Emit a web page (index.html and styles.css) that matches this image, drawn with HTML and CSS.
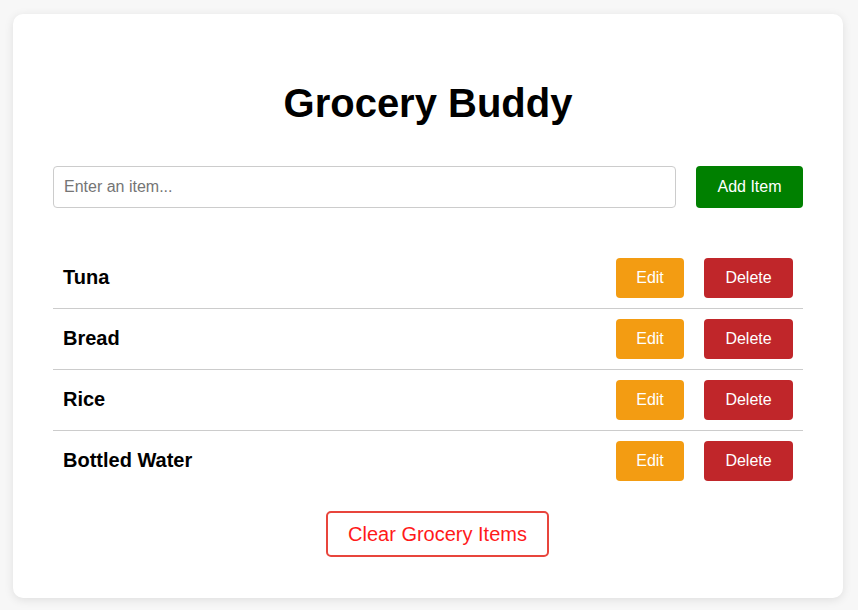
FILE: index.html
```html
<!DOCTYPE html>
<html lang="en">
<head>
<meta charset="UTF-8">
<title>Grocery Buddy</title>
<link rel="stylesheet" href="styles.css">
</head>
<body>
<main class="card">
  <h1 class="title">Grocery Buddy</h1>
  <form class="add-form">
    <input class="add-input" type="text" placeholder="Enter an item...">
    <button class="btn btn-add" type="button">Add Item</button>
  </form>
  <ul class="list">
    <li class="item"><span class="item-name">Tuna</span><div class="actions"><button class="btn btn-edit">Edit</button><button class="btn btn-delete">Delete</button></div></li>
    <li class="item"><span class="item-name">Bread</span><div class="actions"><button class="btn btn-edit">Edit</button><button class="btn btn-delete">Delete</button></div></li>
    <li class="item"><span class="item-name">Rice</span><div class="actions"><button class="btn btn-edit">Edit</button><button class="btn btn-delete">Delete</button></div></li>
    <li class="item"><span class="item-name">Bottled Water</span><div class="actions"><button class="btn btn-edit">Edit</button><button class="btn btn-delete">Delete</button></div></li>
  </ul>
  <div class="clear-wrap"><button class="btn btn-clear">Clear Grocery Items</button></div>
</main>
</body>
</html>
```
FILE: styles.css
```css
* { box-sizing: border-box; }
html, body { margin: 0; }
body {
  background: #f7f7f7;
  font-family: "Liberation Sans", Arial, sans-serif;
  padding: 14px 15px 0 13px;
  min-height: 610px;
}
.card {
  background: #fff;
  border-radius: 10px;
  box-shadow: 0 2px 10px rgba(0,0,0,0.1);
  padding: 40px;
  width: 830px;
  height: 584px;
}
.title {
  font-size: 40px;
  font-weight: bold;
  text-align: center;
  color: #000;
  margin: 26px 0 40px;
  line-height: 46px;
}
.add-form {
  display: flex;
  gap: 20px;
  margin-bottom: 40px;
}
.add-input {
  flex: 1;
  height: 42px;
  border: 1px solid #ccc;
  border-radius: 4px;
  padding: 0 10px;
  font-size: 16px;
  font-family: "Liberation Sans", Arial, sans-serif;
  color: #333;
}
.add-input::placeholder { color: #757575; }
.btn {
  border: none;
  border-radius: 4px;
  font-family: "Liberation Sans", Arial, sans-serif;
  font-size: 16px;
  color: #fff;
  padding: 0 20px;
  cursor: pointer;
}
.btn-add {
  background: #008000;
  height: 42px;
  width: 107px;
  padding: 0;
}
.list {
  list-style: none;
  margin: 0;
  padding: 0;
}
.item {
  display: flex;
  align-items: center;
  justify-content: space-between;
  padding: 10px;
  border-bottom: 1px solid #ccc;
  height: 61px;
}
.item:last-child { border-bottom: none; height: 60px; }
.item-name {
  font-size: 20px;
  font-weight: bold;
  color: #000;
  margin-top: -2px;
}
.actions {
  display: flex;
  gap: 20px;
}
.btn-edit {
  background: #f39c12;
  height: 40px;
  width: 68px;
  padding: 0;
}
.btn-delete {
  background: #c0262a;
  height: 40px;
  width: 89px;
  padding: 0;
}
.clear-wrap {
  display: flex;
  justify-content: center;
  margin-top: 20px;
  padding-left: 19px;
}
.btn-clear {
  background: #fff;
  border: 2px solid #e8453c;
  color: #ff1a1a;
  font-size: 20px;
  height: 46px;
  width: 223px;
  padding: 0;
  border-radius: 5px;
}
```
